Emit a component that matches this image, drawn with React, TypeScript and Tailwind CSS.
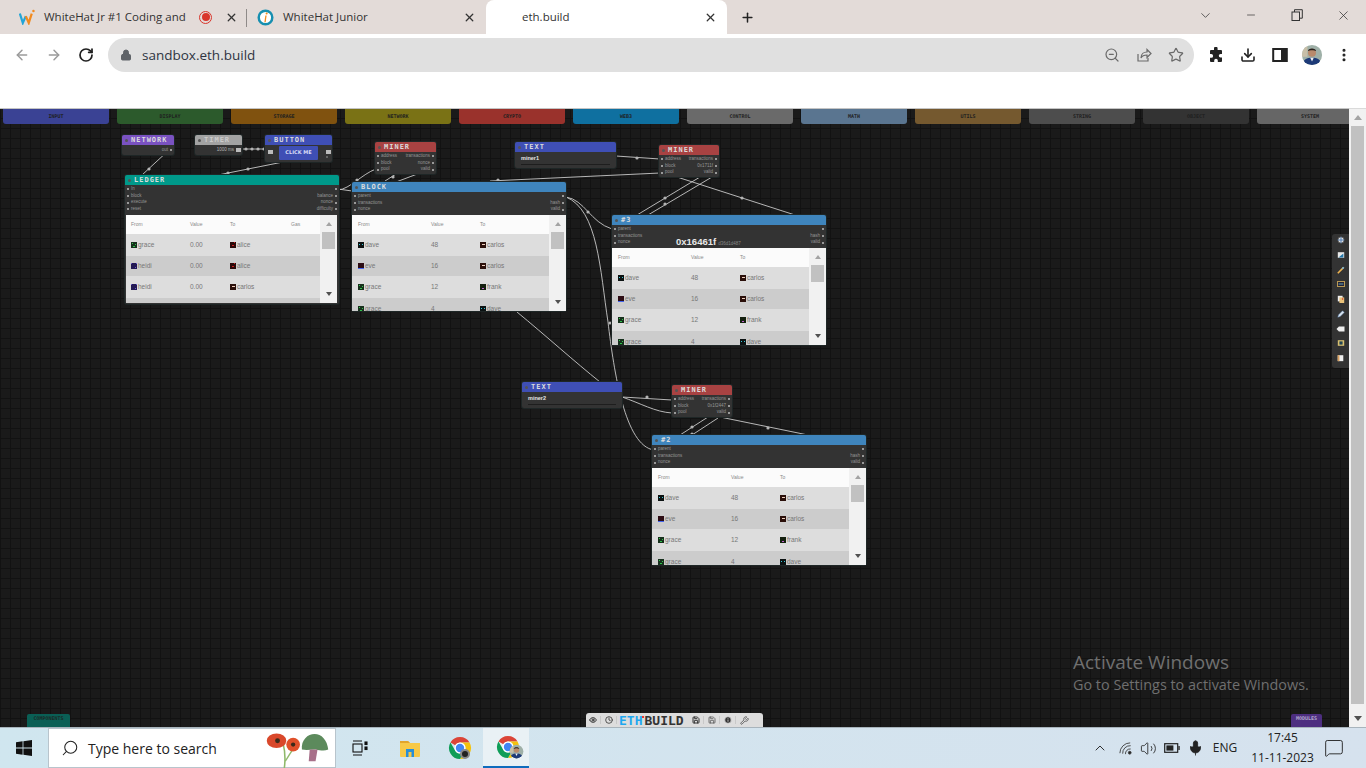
import React from "react";
import { ArrowLeft, ArrowRight, RotateCw, Lock, ZoomOut, Star, Download, X, Plus, ChevronDown, ChevronUp, Minus, Search, Volume2, Mic, MessageSquare, Eye, Clock, Save, Info, Wrench, EllipsisVertical } from "lucide-react";

const UI = "font-['Open_Sans','Noto_Sans',sans-serif]";
const PX = "font-['DejaVu_Sans_Mono',monospace] font-bold";

const palette: [string, string][] = [
  ["INPUT", "bg-[#3a4294]"], ["DISPLAY", "bg-[#2c5a2c]"], ["STORAGE", "bg-[#80520f]"], ["NETWORK", "bg-[#7a7215]"],
  ["CRYPTO", "bg-[#9a322c]"], ["WEB3", "bg-[#0f70a0]"], ["CONTROL", "bg-[#6a6a6a]"], ["MATH", "bg-[#5a7590]"],
  ["UTILS", "bg-[#75592f]"], ["STRING", "bg-[#4d4d4d]"], ["OBJECT", "bg-[#333333]"], ["SYSTEM", "bg-[#666666]"],
];

const avatarDefs: Record<string, { bg: string; fg: string; cells: [number, number][] }> = {
  grace: { bg: "#16301c", fg: "#2fc24a", cells: [[1, 1], [6, 1], [2, 3], [5, 3], [3, 5], [4, 5], [1, 6], [6, 6]] },
  heidi: { bg: "#241a55", fg: "#6a5ad0", cells: [[0, 0], [7, 0], [2, 5], [5, 5], [1, 6], [6, 6]] },
  alice: { bg: "#2a0808", fg: "#d02020", cells: [[2, 0], [5, 0], [1, 2], [6, 2], [3, 4], [4, 4]] },
  carlos: { bg: "#2a0f0a", fg: "#f0d0c0", cells: [[2, 3], [3, 3], [4, 3], [5, 3]] },
  dave: { bg: "#0c1212", fg: "#35c8d8", cells: [[1, 3], [2, 3], [5, 3], [6, 3]] },
  eve: { bg: "#2c0c14", fg: "#4466ee", cells: [[0, 7], [1, 7], [2, 7], [3, 7], [4, 7], [5, 7], [6, 7], [7, 7]] },
  frank: { bg: "#14200f", fg: "#c060d0", cells: [[3, 2], [4, 2], [3, 5], [4, 5]] },
};

function Avatar({ name }: { name: string }) {
  const a = avatarDefs[name];
  return (
    <svg viewBox="0 0 8 8" className="w-[6px] h-[6px] shrink-0" shapeRendering="crispEdges">
      <rect width="8" height="8" fill={a.bg} />
      {a.cells.map(([x, y], i) => <rect key={i} x={x} y={y} width="1" height="1" fill={a.fg} />)}
    </svg>
  );
}

type Row = [string, string, string];
const ledgerRows: Row[] = [["grace", "0.00", "alice"], ["heidi", "0.00", "alice"], ["heidi", "0.00", "carlos"]];
const blockRows: Row[] = [["dave", "48", "carlos"], ["eve", "16", "carlos"], ["grace", "12", "frank"], ["grace", "4", "dave"]];
const rowClasses = ["h-[22px] bg-[#dddddd]", "h-[20px] bg-[#cccccc]", "h-[22px] bg-[#dddddd]", "h-[22px] bg-[#cccccc]"];

function Table({ rows, gridClass, gas }: { rows: Row[]; gridClass: string; gas?: boolean }) {
  return (
    <div className="flex flex-1 min-h-0 overflow-hidden bg-white">
      <div className="flex-1 min-w-0 font-['Liberation_Sans',sans-serif]">
        <div className={`grid ${gridClass} h-[19px] items-center bg-[#fbfbfb] text-[5px] text-[#8a8a8a]`}>
          <span>From</span><span>Value</span><span>To</span>{gas && <span>Gas</span>}
        </div>
        {rows.map((r, i) => (
          <div key={i} className={`grid ${gridClass} items-center text-[6.5px] text-[#777777] ${rowClasses[i]}`}>
            <span className="flex items-center gap-[1px]"><Avatar name={r[0]} />{r[0]}</span>
            <span>{r[1]}</span>
            <span className="flex items-center gap-[1px]"><Avatar name={r[2]} />{r[2]}</span>
            {gas && <span />}
          </div>
        ))}
        {rows.length === 3 && <div className={rowClasses[3]} />}
      </div>
      <div className="w-[17px] shrink-0 bg-[#f1f1f1] flex flex-col items-center relative">
        <div className="mt-[7px] w-0 h-0 border-x-[3.5px] border-x-transparent border-b-[4px] border-b-[#a3a3a3]" />
        <div className="mt-[6px] ml-[2px] self-start w-[13px] h-[17px] bg-[#c1c1c1]" />
        <div className="absolute bottom-[7px] w-0 h-0 border-x-[3.5px] border-x-transparent border-t-[4px] border-t-[#505050]" />
      </div>
    </div>
  );
}

function Port({ filled = true }: { filled?: boolean }) {
  return <span className={`inline-block w-[2px] h-[2px] rounded-full shrink-0 ${filled ? "bg-[#bdbdbd]" : "bg-[#777777]"}`} />;
}

function Labels({ left, right }: { left: string[]; right: string[] }) {
  const n = Math.max(left.length, right.length);
  return (
    <div className="pt-[1px] font-['Liberation_Sans',sans-serif] text-[4.5px] text-[#969696] leading-[6.7px]">
      {Array.from({ length: n }).map((_, i) => (
        <div key={i} className="flex justify-between items-center h-[6.7px] px-[2px]">
          <span className="flex items-center gap-[2px]"><Port />{left[i]}</span>
          <span className="flex items-center gap-[2px]">{right[i]}{right[i] !== undefined && <Port />}</span>
        </div>
      ))}
    </div>
  );
}

type NodeProps = {
  x: number; y: number; w: number; h: number; title: string; head: string; titleColor?: string; children?: React.ReactNode;
};

function GraphNode({ x, y, w, h, title, head, titleColor = "text-[#dcdcdc]", children }: NodeProps) {
  return (
    <div className="absolute flex flex-col rounded-[2px] bg-[#333333] shadow-[0_0_0_1px_#1e2626]" style={{ left: x, top: y - 108, width: w, height: h }}>
      <div className={`h-[10px] shrink-0 flex items-center gap-[3px] pl-[3px] rounded-t-[2px] ${head}`}>
        <span className="w-[3px] h-[3px] rounded-full bg-[#555555] shrink-0" />
        <span className={`${PX} text-[7px] tracking-[1px] leading-none ${titleColor}`}>{title}</span>
      </div>
      {children}
    </div>
  );
}

function TextBody({ value }: { value: string }) {
  return (
    <div className="px-[6px] pt-[3px]">
      <div className="font-['Liberation_Sans',sans-serif] font-bold text-[5.5px] leading-[7px] text-[#e5e5e5]">{value}</div>
      <div className="mt-[2px] h-[1px] bg-[#1e1e1e]" />
    </div>
  );
}

function Hash() {
  return (
    <div className="absolute left-[64px] top-[20px] flex items-baseline gap-[2px] font-['Liberation_Sans',sans-serif]">
      <span className="text-[9.5px] leading-[13px] text-[#e8e8e8] font-bold">0x16461f</span>
      <span className="text-[4.5px] text-[#888888]">d36d1d487</span>
    </div>
  );
}

const wires = [
  "M169 150 L142 175",
  "M240 149 L268 149",
  "M288 161 L218 175",
  "M338 190 C350 189 362 174 376 169",
  "M385 181 L396 174",
  "M396 182 L420 173",
  "M338 189 L352 191",
  "M566 197 C585 200 590 222 612 229",
  "M566 197 C598 210 600 270 608 322 C614 372 625 446 654 450",
  "M616 156 L660 159",
  "M490 181 L660 173",
  "M700 177 L637 215",
  "M712 177 L648 215",
  "M677 177 L795 215",
  "M517 312 C545 335 575 362 600 382",
  "M622 397 L672 400",
  "M622 397 C640 403 655 412 672 413",
  "M708 417 L680 435",
  "M718 418 L692 435",
  "M720 417 L808 435",
];
const dots: [number, number][] = [[149, 169], [228, 173], [248, 169], [246, 149], [252, 149], [258, 149], [264, 149], [357, 180], [393, 177], [498, 180], [588, 212], [637, 158], [665, 198], [665, 204], [742, 198], [610, 323], [647, 397], [692, 427], [692, 434], [768, 428]];

function Wires() {
  return (
    <svg className="absolute left-0 top-[-108px] w-[1349px] h-[727px] pointer-events-none" viewBox="0 0 1349 727" fill="none">
      {wires.map((d, i) => <path key={i} d={d} stroke="#c8c8c8" strokeWidth="0.9" />)}
      {dots.map(([x, y], i) => <circle key={i} cx={x} cy={y} r="1.6" fill="#b4b4b4" />)}
    </svg>
  );
}

function ChromeLogo({ className = "w-6 h-6" }: { className?: string }) {
  return (
    <svg viewBox="0 0 24 24" className={className}>
      <path d="M12 1a11 11 0 0 1 9.53 5.5H12a5.5 5.5 0 0 0-4.76 2.75L2.47 6.5A11 11 0 0 1 12 1z" fill="#db4437" />
      <path d="M21.53 6.5A11 11 0 0 1 12 23l4.76-8.25A5.5 5.5 0 0 0 12 6.5z" fill="#f4c20d" />
      <path d="M2.47 6.5l4.77 8.25a5.5 5.5 0 0 0 9.52 0L12 23A11 11 0 0 1 2.47 6.5z" fill="#0f9d58" />
      <circle cx="12" cy="12" r="5.5" fill="#fff" />
      <circle cx="12" cy="12" r="4.2" fill="#4285f4" />
    </svg>
  );
}

function Face({ className }: { className: string }) {
  return (
    <svg viewBox="0 0 24 24" className={className}>
      <defs><clipPath id="faceclip"><circle cx="12" cy="12" r="11" /></clipPath></defs>
      <g clipPath="url(#faceclip)">
        <rect width="24" height="24" fill="#9fb0a8" />
        <rect x="0" y="0" width="7" height="14" fill="#c8bfa8" />
        <path d="M1 24c1-7 5-9 11-9s10 2 11 9z" fill="#1d3a78" />
        <path d="M10 15l2 4 2-4z" fill="#f0f0f0" />
        <circle cx="12" cy="9.5" r="4.4" fill="#b98a6c" />
        <path d="M7.5 8c0-4 9-4 9 0-2-1.5-7-1.5-9 0z" fill="#27201c" />
      </g>
    </svg>
  );
}

function TabStrip() {
  return (
    <div className={`h-[34px] shrink-0 bg-[#e3dbd8] flex text-[11.5px] text-[#333333] ${UI}`}>
      <div className="w-[247px] flex items-center pl-[19px] pr-[8px] relative">
        <svg viewBox="0 0 20 18" className="w-[17px] h-[16px] shrink-0">
          <path d="M1 5l3.5 11L8 8" fill="none" stroke="#22a5d8" strokeWidth="2.6" />
          <path d="M8 8l3.5 8L15 5" fill="none" stroke="#f28a1e" strokeWidth="2.6" />
          <circle cx="17" cy="2" r="1.5" fill="#f28a1e" />
        </svg>
        <span className="ml-[8px] w-[147px] whitespace-nowrap">WhiteHat Jr #1 Coding and</span>
        <span className="ml-[8px] w-[13px] h-[13px] rounded-full border border-[#d9352b] flex items-center justify-center shrink-0"><span className="w-[8px] h-[8px] rounded-full bg-[#d9352b]" /></span>
        <X className="ml-[13px] w-[13px] h-[13px] shrink-0" strokeWidth={2.4} />
        <span className="absolute right-0 top-[9px] w-px h-[18px] bg-[#8f8a88]" />
      </div>
      <div className="w-[239px] flex items-center pl-[10px]">
        <svg viewBox="0 0 18 18" className="w-[17px] h-[17px] shrink-0">
          <circle cx="9" cy="9" r="7.2" fill="#fff" stroke="#178fb0" strokeWidth="2.6" />
          <path d="M7.8 14l1-7h1.4l-1 7z" fill="#f28a1e" />
          <circle cx="10.2" cy="4.8" r="1.1" fill="#f28a1e" />
        </svg>
        <span className="ml-[9px] w-[180px] whitespace-nowrap">WhiteHat Junior</span>
        <X className="w-[13px] h-[13px] shrink-0" strokeWidth={2.4} />
      </div>
      <div className="w-[241px] bg-white rounded-t-[8px] flex items-center pl-[36px]">
        <span className="w-[182px] whitespace-nowrap">eth.build</span>
        <X className="w-[13px] h-[13px] shrink-0" strokeWidth={2.4} />
      </div>
      <div className="ml-[13px] flex items-center"><Plus className="w-[15px] h-[15px] text-[#222222]" strokeWidth={2.4} /></div>
      <div className="ml-auto flex items-center text-[#333333]">
        <span className="w-[46px] flex justify-center -mt-[4px]"><ChevronDown className="w-[15px] h-[15px]" strokeWidth={1.2} /></span>
        <span className="w-[46px] flex justify-center -mt-[4px]"><Minus className="w-[12px] h-[12px]" strokeWidth={1.4} /></span>
        <span className="w-[46px] flex justify-center -mt-[4px]">
          <svg viewBox="0 0 12 12" className="w-[12px] h-[12px]" fill="none" stroke="#333" strokeWidth="1"><rect x="1" y="3" width="7.5" height="8.5" /><path d="M3.5 3V.7h7.8v8.5H8.5" /></svg>
        </span>
        <span className="w-[46px] flex justify-center -mt-[4px]"><X className="w-[15px] h-[15px]" strokeWidth={1.2} /></span>
      </div>
    </div>
  );
}

function Toolbar() {
  return (
    <div className={`h-[74px] shrink-0 bg-white ${UI}`}>
      <div className="h-[38px] flex items-end">
        <div className="h-[34px] w-[108px] flex items-center pl-[14px] gap-[16px]">
          <ArrowLeft className="w-[16px] h-[16px] text-[#9a9a9a]" strokeWidth={2.2} />
          <ArrowRight className="w-[16px] h-[16px] text-[#9a9a9a]" strokeWidth={2.2} />
          <RotateCw className="w-[16px] h-[16px] text-[#1f1f1f]" strokeWidth={2.6} />
        </div>
        <div className="h-[34px] w-[1086px] rounded-full bg-[#e0e0e0] flex items-center pl-[12px] pr-[10px]">
          <Lock className="w-[12px] h-[12px] text-[#5f6368] fill-[#5f6368]" />
          <span className="ml-[10px] text-[13.5px] text-[#2e3440]">sandbox.eth.build</span>
          <span className="ml-auto flex items-center gap-[16px] text-[#6a6a6a]">
            <ZoomOut className="w-[16px] h-[16px]" strokeWidth={1.8} />
            <svg viewBox="0 0 16 16" className="w-[16px] h-[16px]" fill="none" stroke="currentColor" strokeWidth="1.2"><path d="M2 7v7h10v-3" /><path d="M5 11c0-4 3-6 6-6V2.5l4 4-4 4V8c-3 0-5 1-6 3z" /></svg>
            <Star className="w-[16px] h-[16px]" strokeWidth={1.8} />
          </span>
        </div>
        <div className="h-[34px] flex items-center pl-[14px] gap-[16px] text-[#222222]">
          <svg viewBox="0 0 16 16" className="w-[16px] h-[16px]" fill="#222"><path d="M6 1.5a1.8 1.8 0 0 1 3.6 0V3H13a1 1 0 0 1 1 1v3h-1.4a1.8 1.8 0 0 0 0 3.6H14V14a1 1 0 0 1-1 1H9.8v-1.4a1.8 1.8 0 0 0-3.6 0V15H3a1 1 0 0 1-1-1v-3.2h1.2a1.9 1.9 0 0 0 0-3.8H2V4a1 1 0 0 1 1-1h3z" /></svg>
          <Download className="w-[16px] h-[16px]" strokeWidth={2.4} />
          <svg viewBox="0 0 16 16" className="w-[16px] h-[16px]"><rect x="1.2" y="2" width="13.6" height="12" fill="none" stroke="#222" strokeWidth="2" /><rect x="9" y="2" width="5" height="12" fill="#222" /></svg>
          <Face className="w-[22px] h-[22px] -mx-[3px]" />
          <EllipsisVertical className="w-[16px] h-[16px]" strokeWidth={2.6} />
        </div>
      </div>
    </div>
  );
}

const sideIcons = [
  <svg key="1" viewBox="0 0 10 10" className="w-[8px] h-[8px]"><circle cx="5" cy="5" r="4" fill="#ddd" stroke="#333" /><path d="M5 1v8M1 5h8" stroke="#3b6fb0" /></svg>,
  <svg key="2" viewBox="0 0 10 10" className="w-[8px] h-[8px]"><rect x="1" y="1.5" width="8" height="7" fill="#e8e8e8" /><path d="M2 8l6-5v5z" fill="#2277aa" /></svg>,
  <svg key="3" viewBox="0 0 10 10" className="w-[8px] h-[8px]"><path d="M1 9l7-7" stroke="#eeb350" strokeWidth="2" /><path d="M6.5 3.5l2-2" stroke="#7bb8de" strokeWidth="2" /></svg>,
  <svg key="4" viewBox="0 0 10 10" className="w-[8px] h-[8px]"><rect x=".5" y="2" width="9" height="6" fill="#223" stroke="#dcb45c" /><path d="M2 5h6" stroke="#7bc0e0" /></svg>,
  <svg key="5" viewBox="0 0 10 10" className="w-[8px] h-[8px]"><rect x="1" y="1" width="6" height="7" fill="#eee" /><rect x="3" y="3" width="6" height="7" fill="#e9c27a" /><circle cx="7" cy="5" r="1" fill="#d0392b" /></svg>,
  <svg key="6" viewBox="0 0 10 10" className="w-[8px] h-[8px]"><path d="M1 9l3-1 5-5-2-2-5 5z" fill="#dce6f0" stroke="#5e86b8" strokeWidth=".6" /></svg>,
  <svg key="7" viewBox="0 0 10 10" className="w-[9px] h-[8px]"><path d="M3 2h7v6H3L0 5z" fill="#eeeeee" /></svg>,
  <svg key="8" viewBox="0 0 10 10" className="w-[8px] h-[8px]"><rect x="1" y="1.5" width="8" height="7" fill="#d8c070" /><rect x="3" y="3" width="4" height="4" fill="#245" /></svg>,
  <svg key="9" viewBox="0 0 10 10" className="w-[7px] h-[8px]"><rect x="1" y="1" width="8" height="8.5" fill="#eeeeee" /><rect x="1" y="1" width="2.5" height="8.5" fill="#d9a05c" /></svg>,
];

const LEDGER_GRID = "grid-cols-[59px_40px_61px_1fr] pl-[5px]";
const BLOCK_GRID = "grid-cols-[73px_49px_1fr] pl-[6px]";

function Canvas() {
  return (
    <div className="relative flex-1 min-w-0 overflow-hidden bg-[#1a1a1a] bg-[linear-gradient(#121212_1px,transparent_1px),linear-gradient(90deg,#121212_1px,transparent_1px)] bg-[size:10px_10px]">
      <div className="flex gap-[8px] pl-[3px] border-t border-[#c4c4c4] h-[16px] relative">
        {palette.map(([name, cls]) => (
          <div key={name} className={`w-[106px] h-[15px] shrink-0 rounded-b-[3px] flex items-center justify-center ${cls} ${PX} text-[5px] text-[#1f1f1f]`}>{name}</div>
        ))}
      </div>

      <Wires />

      <GraphNode x={122} y={135} w={52} h={20} title="NETWORK" head="bg-[#7a52c2]">
        <div className="flex justify-end items-center gap-[2px] px-[2px] pt-[2px] font-['Liberation_Sans',sans-serif] text-[4.5px] text-[#969696]">out<Port /></div>
      </GraphNode>
      <GraphNode x={195} y={135} w={47} h={20} title="TIMER" head="bg-[#a3a3a3]" titleColor="text-[#cccccc]">
        <div className="flex justify-end items-center gap-[2px] pr-[1px] pt-[2px] font-['Liberation_Sans',sans-serif] text-[4.5px] text-[#b5b5b5]">1000 ms<span className="w-[5px] h-[4px] bg-[#bbbbbb]" /></div>
      </GraphNode>
      <GraphNode x={265} y={135} w={67} h={27} title="BUTTON" head="bg-[#3f4fb5]">
        <div className="flex items-start pt-[1px] pl-[3px] pr-[1px]">
          <span className="w-[5px] h-[4px] bg-[#bbbbbb] mt-[4px]" />
          <div className="ml-[6px] w-[39px] h-[14px] bg-[#3f4fb5] rounded-[1px] flex items-center justify-center font-['DejaVu_Sans',sans-serif] font-bold text-[5px] text-[#d7dcf5]">CLICK ME</div>
          <div className="ml-auto flex flex-col gap-[2px] mt-[4px]"><span className="w-[5px] h-[4px] bg-[#bbbbbb]" /><Port filled={false} /></div>
        </div>
      </GraphNode>

      <GraphNode x={125} y={175} w={214} h={129} title="LEDGER" head="bg-[#00998a]">
        <div className="h-[30px] shrink-0"><Labels left={["In", "block", "execute", "reset"]} right={["", "balance", "nonce", "difficulty"]} /></div>
        <div className="pl-[1px] pr-[2px] pb-px flex-1 min-h-0 flex"><Table rows={ledgerRows} gridClass={LEDGER_GRID} gas /></div>
      </GraphNode>

      <GraphNode x={375} y={142} w={61} h={32} title="MINER" head="bg-[#a84242]">
        <Labels left={["address", "block", "pool"]} right={["transactions", "nonce", "valid"]} />
      </GraphNode>

      <GraphNode x={352} y={182} w={214} h={129} title="BLOCK" head="bg-[#3f85bd]">
        <div className="h-[23px] shrink-0"><Labels left={["parent", "transactions", "nonce"]} right={["", "hash", "valid"]} /></div>
        <Table rows={blockRows} gridClass={BLOCK_GRID} />
      </GraphNode>

      <GraphNode x={515} y={142} w={101} h={26} title="TEXT" head="bg-[#3f4fb5]"><TextBody value="miner1" /></GraphNode>

      <GraphNode x={659} y={145} w={60} h={32} title="MINER" head="bg-[#a84242]">
        <Labels left={["address", "block", "pool"]} right={["transactions", "0x1711f", "valid"]} />
      </GraphNode>

      <GraphNode x={612} y={215} w={214} h={130} title="#3" head="bg-[#3f85bd]">
        <div className="h-[23px] shrink-0 relative"><Labels left={["parent", "transactions", "nonce"]} right={["", "hash", "valid"]} /><div className="absolute left-0 top-[-10px]"><Hash /></div></div>
        <Table rows={blockRows} gridClass={BLOCK_GRID} />
      </GraphNode>

      <GraphNode x={522} y={382} w={100} h={26} title="TEXT" head="bg-[#3f4fb5]"><TextBody value="miner2" /></GraphNode>

      <GraphNode x={672} y={385} w={60} h={32} title="MINER" head="bg-[#a84242]">
        <Labels left={["address", "block", "pool"]} right={["transactions", "0x1f2447", "valid"]} />
      </GraphNode>

      <GraphNode x={652} y={435} w={214} h={130} title="#2" head="bg-[#3f85bd]">
        <div className="h-[23px] shrink-0"><Labels left={["parent", "transactions", "nonce"]} right={["", "hash", "valid"]} /></div>
        <Table rows={blockRows} gridClass={BLOCK_GRID} />
      </GraphNode>

      <div className="absolute right-0 top-[126px] w-[17px] h-[134px] bg-[#333333] rounded-l-[3px] flex flex-col items-center gap-[6.75px] pt-[2px]">
        {sideIcons}
      </div>

      <div className={`absolute left-[1073px] top-[542px] text-[#6f6f6f] ${UI} whitespace-nowrap`}>
        <div className="text-[19px] leading-[24px]">Activate Windows</div>
        <div className="text-[14.4px] leading-[20px] mt-[1px]">Go to Settings to activate Windows.</div>
      </div>

      <div className={`absolute bottom-0 left-[27px] w-[43px] h-[13px] rounded-t-[2px] bg-[#0a5f55] flex items-start justify-center pt-[1px] ${PX} text-[5px] text-[#1c2b28]`}>COMPONENTS</div>
      <div className={`absolute bottom-0 left-[1291px] w-[31px] h-[13px] rounded-t-[2px] bg-[#4d2e80] flex items-start justify-center pt-[1px] ${PX} text-[5px] text-[#b3a6cc]`}>MODULES</div>

      <div className="absolute bottom-0 left-[586px] w-[177px] h-[14px] rounded-t-[3px] bg-[#dddddd] flex items-center text-[#333333]">
        <span className="w-[15px] flex justify-center border-r border-[#c8c8c8]"><Eye className="w-[8px] h-[8px]" strokeWidth={3} /></span>
        <span className="w-[16px] flex justify-center border-r border-[#c8c8c8]"><Clock className="w-[8px] h-[8px]" strokeWidth={2.4} /></span>
        <span className={`ml-[2px] w-[69px] ${PX} text-[13px] leading-none whitespace-nowrap relative`}>
          <span className="text-[#1ea7f0]">ETH</span><span className="inline-block w-[2px] h-[2px] bg-[#e33] align-top mt-[2px]" /><span className="text-[#333333]">BUILD</span>
        </span>
        <span className="w-[16px] flex justify-center border-r border-[#c8c8c8]"><Save className="w-[8px] h-[8px]" strokeWidth={3} /></span>
        <span className="w-[16px] flex justify-center border-r border-[#c8c8c8]"><Save className="w-[8px] h-[8px] text-[#555555]" strokeWidth={2.4} /></span>
        <span className="w-[16px] flex justify-center border-r border-[#c8c8c8]"><Info className="w-[8px] h-[8px] fill-[#333333] text-[#dddddd]" strokeWidth={2.4} /></span>
        <span className="w-[16px] flex justify-center"><Wrench className="w-[9px] h-[9px] text-[#666666]" strokeWidth={2.6} /></span>
      </div>
    </div>
  );
}

function PageScrollbar() {
  return (
    <div className="w-[17px] shrink-0 bg-[#f1f1f1] flex flex-col items-center border-t border-[#dadada] relative">
      <div className="mt-[6px] w-0 h-0 border-x-[4px] border-x-transparent border-b-[5px] border-b-[#a3a3a3]" />
      <div className="mt-[6px] w-[13px] h-[578px] bg-[#c1c1c1]" />
      <div className="absolute bottom-[6px] w-0 h-0 border-x-[4px] border-x-transparent border-t-[5px] border-t-[#505050]" />
    </div>
  );
}

function Taskbar() {
  return (
    <div className={`h-[41px] shrink-0 bg-gradient-to-r from-[#d0e6ef] to-[#d6e2ee] flex items-stretch border-t border-[#a8b4bc] ${UI}`}>
      <div className="w-[48px] flex items-center justify-center">
        <svg viewBox="0 0 16 16" className="w-[16px] h-[16px]" fill="#111"><path d="M0 2.2L6.6 1.3v6.3H0zM7.4 1.2L16 0v7.6H7.4zM0 8.4h6.6v6.3L0 13.8zM7.4 8.4H16V16l-8.6-1.2z" /></svg>
      </div>
      <div className="w-[288px] bg-white border border-[#b8c4cc] flex items-center pl-[12px] relative">
        <Search className="w-[18px] h-[18px] -scale-x-100 text-[#222222]" strokeWidth={1.4} />
        <span className="ml-[9px] text-[14px] text-[#222222]">Type here to search</span>
        <svg viewBox="0 0 66 41" className="absolute right-[4px] top-0 w-[66px] h-[40px]">
          <path d="M18 16c2 8 2 16 1 24" stroke="#8fb96a" strokeWidth="1.6" fill="none" />
          <path d="M27 22l-7 11" stroke="#8fb96a" strokeWidth="1.4" fill="none" />
          <ellipse cx="11" cy="12" rx="10" ry="7.5" fill="#d9482b" />
          <circle cx="12" cy="12" r="2.5" fill="#3a2a1a" />
          <circle cx="28" cy="16" r="7" fill="#e0502a" /><circle cx="28" cy="16" r="2.2" fill="#3a2a1a" />
          <path d="M37 21c-1-10 6-16 13-16s13 6 14 16c-4 2-8 1-13 0-5 0-9 1-14 0z" fill="#5c8a5c" />
          <path d="M45 21h8l-2 12h-7z" fill="#a8708a" />
        </svg>
      </div>
      <div className="w-[48px] flex items-center justify-center">
        <svg viewBox="0 0 16 16" className="w-[16px] h-[16px]" fill="none" stroke="#111" strokeWidth="1.1"><path d="M1 1h9M1 15h9" /><rect x="1" y="4" width="9" height="8" /><rect x="13" y="2" width="2" height="2.5" fill="#111" /><rect x="13" y="7" width="2" height="2.5" fill="#111" /></svg>
      </div>
      <div className="w-[52px] flex items-center justify-center">
        <svg viewBox="0 0 22 20" className="w-[22px] h-[20px]"><path d="M1 3h8l2 2h10v13a1 1 0 0 1-1 1H2a1 1 0 0 1-1-1z" fill="#f7c948" /><path d="M1 3h8l2 2H1z" fill="#e2a52c" /><rect x="7" y="11" width="8" height="8" fill="#2a8fd8" /><rect x="9.5" y="14" width="3" height="5" fill="#f7c948" /></svg>
      </div>
      <div className="w-[47px] flex items-center justify-center relative">
        <ChromeLogo className="w-[24px] h-[24px]" />
        <span className="absolute left-[24px] top-[21px] w-[10px] h-[10px] rounded-full bg-[#222222] border-[2.5px] border-[#888888]" />
      </div>
      <div className="w-[46px] bg-[#e9f1f5] border-b-2 border-[#0f6cbd] flex items-center justify-center pl-[3px] relative">
        <ChromeLogo className="w-[24px] h-[24px]" />
        <Face className="absolute left-[26px] top-[16px] w-[15px] h-[15px]" />
      </div>
      <div className="ml-auto flex items-center text-[#222222]">
        <span className="w-[26px] flex justify-center"><ChevronUp className="w-[16px] h-[16px]" strokeWidth={1.4} /></span>
        <span className="w-[24px] flex justify-center">
          <svg viewBox="0 0 16 16" className="w-[15px] h-[15px]" fill="none" stroke="#444" strokeWidth="1"><path d="M2 13A11 11 0 0 1 13 2M5 13.5A8 8 0 0 1 13.5 5M8 14a5 5 0 0 1 5.5-5.5" /><circle cx="12.5" cy="12.5" r="1.5" fill="#222" /></svg>
        </span>
        <span className="w-[22px] flex justify-center"><Volume2 className="w-[17px] h-[17px]" strokeWidth={1.2} /></span>
        <span className="w-[26px] flex justify-center">
          <svg viewBox="0 0 16 10" className="w-[16px] h-[10px]"><rect x=".7" y=".7" width="13" height="8.6" fill="none" stroke="#222" strokeWidth="1.2" /><rect x="2.4" y="2.4" width="7" height="5.2" fill="#222" /><rect x="14.4" y="3" width="1.3" height="4" fill="#222" /></svg>
        </span>
        <span className="w-[20px] flex justify-center"><Mic className="w-[17px] h-[20px] fill-[#222222]" strokeWidth={1.2} /></span>
        <span className="w-[38px] text-center text-[12px] ml-[1px]">ENG</span>
        <div className="w-[71px] text-center text-[12px] leading-[20px] ml-[3px]"><div>17:45</div><div>11-11-2023</div></div>
        <span className="w-[41px] flex justify-center -ml-[5px]"><MessageSquare className="w-[20px] h-[20px]" strokeWidth={1.1} /></span>
        <span className="w-[12px]" />
      </div>
    </div>
  );
}

export default function App() {
  return (
    <div className="w-[1366px] h-[768px] overflow-hidden flex flex-col bg-white">
      <TabStrip />
      <Toolbar />
      <div className="flex flex-1 min-h-0">
        <Canvas />
        <PageScrollbar />
      </div>
      <Taskbar />
    </div>
  );
}
